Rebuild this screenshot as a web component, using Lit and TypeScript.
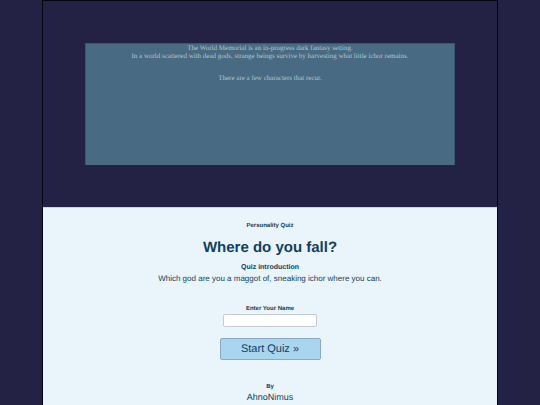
import { LitElement, html, css } from "lit";
import { customElement, state } from "lit/decorators.js";

@customElement("intro-panel")
class IntroPanel extends LitElement {
  static styles = css`
    :host {
      display: block;
      padding: 42px;
    }
    .panel {
      border: 1px solid #3c5672;
      border-bottom: 0;
      background: #486a82;
      min-height: 122px;
      box-sizing: border-box;
      font: 7px/8px "Liberation Serif", serif;
      color: #b4c4d1;
      text-align: center;
    }
    p {
      margin: 0;
    }
    .note {
      margin-top: 14px;
    }
  `;
  render() {
    return html`
      <section class="panel">
        <p>The World Memorial is an in-progress dark fantasy setting.</p>
        <p>In a world scattered with dead gods, strange beings survive by harvesting what little ichor remains.</p>
        <p class="note">There are a few characters that recur.</p>
      </section>
    `;
  }
}

@customElement("quiz-card")
class QuizCard extends LitElement {
  static styles = css`
    :host {
      display: block;
      flex: 1;
      padding: 14px 16px 0;
      border-top: 1px solid #d3cde6;
      background: #e9f5fb;
      color: #113f60;
      font: 8px/10px "Liberation Sans", sans-serif;
      text-align: center;
    }
    h1,
    h2,
    p {
      margin: 0;
    }
    .kicker,
    .label {
      display: block;
      font-size: 6px;
      font-weight: bold;
      line-height: 8px;
    }
    h1 {
      margin-top: 8px;
      font-size: 15px;
      line-height: 20px;
    }
    h2 {
      margin-top: 6px;
      font-size: 7px;
      line-height: 8px;
    }
    .intro {
      margin-top: 2px;
    }
    form {
      display: flex;
      flex-direction: column;
      align-items: center;
      margin-top: 21px;
    }
    input {
      box-sizing: border-box;
      width: 94px;
      height: 13px;
      margin-top: 1px;
      padding: 0 4px;
      border: 1px solid #c3cdd3;
      border-radius: 2px;
      background: #fff;
      color: inherit;
      font: inherit;
    }
    button {
      box-sizing: border-box;
      width: 101px;
      height: 22px;
      margin-top: 11px;
      padding: 0;
      border: 1px solid #8ba9c4;
      border-radius: 2px;
      background: #a9d5ef;
      color: inherit;
      font: 11px/20px "Liberation Sans", sans-serif;
      text-rendering: inherit;
      cursor: pointer;
    }
    .byline {
      margin-top: 23px;
    }
    .author {
      font-size: 9px;
      line-height: 12px;
    }
  `;

  @state() name = "";

  render() {
    return html`
      <p class="kicker">Personality Quiz</p>
      <h1>Where do you fall?</h1>
      <h2>Quiz introduction</h2>
      <p class="intro">Which god are you a maggot of, sneaking ichor where you can.</p>
      <form @submit=${(e: Event) => e.preventDefault()}>
        <label class="label" for="name">Enter Your Name</label>
        <input
          id="name"
          type="text"
          .value=${this.name}
          @input=${(e: Event) => (this.name = (e.target as HTMLInputElement).value)}
        />
        <button type="submit">Start Quiz »</button>
      </form>
      <div class="byline">
        <p class="label">By</p>
        <p class="author">AhnoNimus</p>
      </div>
    `;
  }
}

@customElement("app-root")
class AppRoot extends LitElement {
  static styles = css`
    :host {
      display: block;
      background: #242244;
      text-rendering: geometricPrecision;
    }
    .column {
      display: flex;
      flex-direction: column;
      box-sizing: border-box;
      min-height: 100vh;
      margin: 0 42px;
      border: solid #06040f;
      border-width: 1px 1px 0;
    }
  `;
  render() {
    return html`
      <main class="column">
        <intro-panel></intro-panel>
        <quiz-card></quiz-card>
      </main>
    `;
  }
}
